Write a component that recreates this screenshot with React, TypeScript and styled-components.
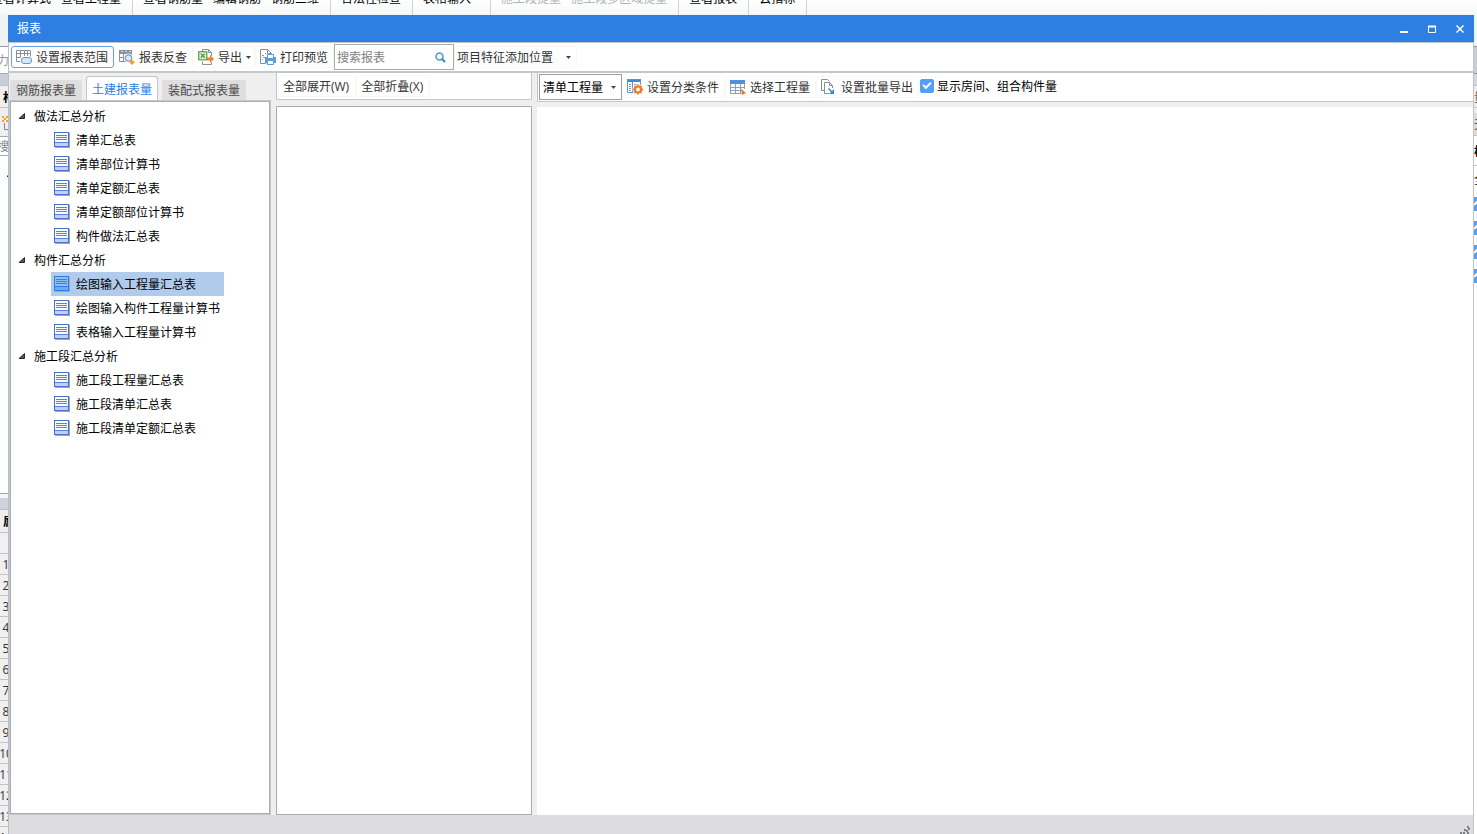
import React, { useState } from 'react';
import styled, { createGlobalStyle } from 'styled-components';

const GlobalStyle = createGlobalStyle`
  *, *::before, *::after { box-sizing: border-box; }
  body {
    margin: 0;
    overflow: hidden;
    color: #000;
    font: 12px/16px "Open Sans", "Noto Sans CJK SC", sans-serif;
  }
  button, input, select { font: inherit; color: inherit; margin: 0; padding: 0; }
  button { border: 0; background: none; white-space: nowrap; cursor: pointer; }
  ul { list-style: none; margin: 0; padding: 0; }
  svg { display: block; flex: none; }
`;

/* ---------- main window behind the dialog ---------- */

const Desktop = styled.div`
  display: flex;
  flex-direction: column;
  height: 100vh;
  background: #fff;
`;

const Ribbon = styled.div`
  display: flex;
  align-items: flex-end;
  flex: none;
  height: 15px;
  overflow: hidden;
  background: linear-gradient(#ffffff, #f5f8f8);
`;

const RibbonGroups = styled.div`
  display: flex;
  margin-left: -19px;
`;

const RibbonGroup = styled.div<{ $wide?: boolean }>`
  display: flex;
  align-items: center;
  gap: 10px;
  height: 32px;
  padding: 0 ${(p) => (p.$wide ? 19 : 11)}px 0 10px;
  border-right: 1px solid #d0d3d3;
`;

const RibbonButton = styled.button`
  height: 16px;
  &:disabled { color: #b4b4b4; }
`;

const Workspace = styled.div`
  display: flex;
  flex: 1;
  min-height: 0;
`;

const Edge = styled.div<{ $width: number }>`
  display: flex;
  flex-direction: column;
  flex: none;
  width: ${(p) => p.$width}px;
  overflow: hidden;
  background: #fff;
`;

const EdgeCell = styled.div<{ $h: number; $bg?: string; $line?: string; $color?: string; $bold?: boolean; $indent?: number }>`
  display: flex;
  align-items: center;
  flex: none;
  height: ${(p) => p.$h}px;
  padding: 2px 0 0 ${(p) => p.$indent ?? 0}px;
  background: ${(p) => p.$bg ?? '#fff'};
  border-bottom: ${(p) => (p.$line ? `1px solid ${p.$line}` : '0')};
  color: ${(p) => p.$color ?? '#000'};
  font-weight: ${(p) => (p.$bold ? 700 : 400)};
  white-space: nowrap;
`;

const Clip = styled.span<{ $pull: number }>`
  margin-left: -${(p) => p.$pull}px;
`;

const RowNumber = styled.div`
  display: flex;
  align-items: center;
  justify-content: center;
  flex: none;
  width: 12px;
  height: 21px;
  padding-top: 2px;
  background: #f0f0f0;
  border-bottom: 1px solid #c3c3c3;
  color: #333;
`;

const EdgeCheck = styled.div`
  display: flex;
  align-items: center;
  flex: none;
  height: 24px;
`;

/* ---------- dialog ---------- */

const Dialog = styled.section`
  display: flex;
  flex-direction: column;
  flex: 1;
  min-width: 0;
  background: #efefef;
`;

const TitleBar = styled.header`
  display: flex;
  align-items: center;
  justify-content: space-between;
  flex: none;
  height: 27px;
  padding-left: 9px;
  background: #2d7fe1;
  color: #fff;
`;

const Title = styled.h1`
  margin: 0;
  font-size: 12px;
  font-weight: 400;
`;

const WindowButtons = styled.div`
  display: flex;
`;

const WindowButton = styled.button`
  display: flex;
  align-items: center;
  justify-content: center;
  width: 28px;
  height: 27px;
`;

const Frame = styled.div`
  display: flex;
  flex-direction: column;
  flex: 1;
  min-height: 0;
  border-left: 1px solid #bac0cb;
  border-right: 1px solid #c0c5ca;
`;

const MainToolbar = styled.div`
  display: flex;
  align-items: center;
  flex: none;
  height: 31px;
  padding-left: 2px;
  background: #fff;
  border-top: 1px solid #c0c5ca;
  border-bottom: 2px solid #c3c8cd;
`;

const Label = styled.span`
  padding-top: 2px;
`;

const ToolButton = styled.button<{ $framed?: boolean; $menu?: boolean }>`
  display: flex;
  align-items: center;
  flex: none;
  gap: 4px;
  height: 22px;
  padding: 0 ${(p) => (p.$menu ? 3 : 5)}px 0 4px;
  border: 1px solid ${(p) => (p.$framed ? '#62a2ea' : '#f8f8f8')};
  border-radius: 3px;
  color: #333;
`;

const PositionButton = styled(ToolButton)`
  gap: 13px;
  padding: 0 5px 0 2px;
`;

const TextButton = styled(ToolButton)`
  padding: 0 6px 0 4px;
`;

const SearchBox = styled.label`
  display: flex;
  align-items: center;
  flex: none;
  width: 120px;
  height: 26px;
  padding: 0 7px 0 2px;
  border: 1px solid #ababab;
  background: #fff;
`;

const SearchInput = styled.input`
  flex: 1;
  min-width: 0;
  height: 22px;
  border: 0;
  outline: 0;
  background: none;
  &::placeholder { color: #808080; opacity: 1; }
`;

const Body = styled.div`
  display: grid;
  grid-template-columns: 260px 256px minmax(0, 1fr);
  flex: 1;
  min-height: 0;
  padding-left: 1px;
`;

const NavColumn = styled.div`
  display: flex;
  flex-direction: column;
  min-height: 0;
  padding-bottom: 1px;
`;

const Tabs = styled.div`
  display: flex;
  align-items: flex-end;
  flex: none;
  gap: 4px;
  height: 28px;
`;

const Tab = styled.button<{ $active: boolean }>`
  height: ${(p) => (p.$active ? 25 : 21)}px;
  padding: ${(p) => (p.$active ? '2px 5px 0' : '0 6px')};
  border: ${(p) => (p.$active ? '1px solid #c3c6ca' : '0')};
  border-bottom: 0;
  border-radius: 3px 3px 0 0;
  background: ${(p) => (p.$active ? '#fff' : '#dedede')};
  color: ${(p) => (p.$active ? '#2d7fe1' : '#4a4a4a')};
`;

const TreePane = styled.div`
  flex: 1;
  min-height: 0;
  overflow: hidden;
  padding-top: 2px;
  background: #fff;
  border: 1px solid #a9acb2;
  outline: 1px solid #c2c7d0;
`;

const Tree = styled.ul`
  width: max-content;
`;

const GroupButton = styled.button`
  display: flex;
  align-items: center;
  gap: 9px;
  height: 24px;
  padding-left: 7px;
`;

const Reports = styled.ul`
  padding-left: 40px;
`;

const ReportButton = styled.button<{ $selected: boolean }>`
  display: flex;
  align-items: center;
  gap: 6px;
  width: 100%;
  height: 24px;
  padding: 0 4px 0 3px;
  background: ${(p) => (p.$selected ? '#b1cbec' : 'transparent')};
`;

const OutlineColumn = styled.div`
  display: flex;
  flex-direction: column;
  gap: 6px;
  min-height: 0;
  margin: 0 -6px 0 6px;
`;

const OutlineToolbar = styled.div`
  display: flex;
  align-items: center;
  flex: none;
  height: 27px;
  padding-left: 1px;
  background: #fff;
  border: 1px solid #c3c6ca;
  border-top: 0;
`;

const OutlinePane = styled.div`
  flex: 1;
  background: #fff;
  border: 1px solid #ababab;
`;

const ReportColumn = styled.div`
  display: flex;
  flex-direction: column;
  gap: 5px;
  min-height: 0;
  margin-left: 11px;
`;

const ReportToolbar = styled.div`
  display: flex;
  align-items: center;
  flex: none;
  height: 29px;
  padding-left: 1px;
  background: #fff;
  border-left: 1px solid #c3c6ca;
  border-bottom: 1px solid #c3c8cd;
`;

const ReportPane = styled.div`
  flex: 1;
  background: #fff;
`;

const SelectBox = styled.div`
  display: grid;
  grid-template-columns: 1fr 10px;
  align-items: center;
  flex: none;
  width: 83px;
  height: 26px;
  border: 1px solid #a0a0a0;
`;

const Select = styled.select`
  grid-area: 1 / 1 / 2 / 3;
  height: 24px;
  padding: 2px 0 0 3px;
  border: 0;
  outline: 0;
  background: transparent;
  appearance: none;
`;

const SelectArrow = styled.span`
  grid-area: 1 / 2 / 2 / 3;
  pointer-events: none;
`;

const CheckLabel = styled.label`
  display: flex;
  align-items: center;
  gap: 3px;
  height: 26px;
  padding: 0 0 2px 1px;
  white-space: nowrap;
`;

const CheckInput = styled.input`
  display: grid;
  place-items: center;
  width: 14px;
  height: 14px;
  appearance: none;
  border: 1px solid #549ff5;
  border-radius: 2px;
  background: #fff;
  &:checked { background: #549ff5; }
  &:checked::after {
    content: '';
    width: 8px;
    height: 5px;
    margin-bottom: 3px;
    border: solid #fff;
    border-width: 0 0 2px 2px;
    transform: rotate(-45deg);
  }
`;

const StatusBar = styled.footer`
  display: flex;
  align-items: flex-end;
  justify-content: flex-end;
  flex: none;
  height: 19px;
  padding-right: 3px;
  background: #dddddf;
`;

/* ---------- icons ---------- */

const Icon = ({ children, w = 16, h = 16 }: { children: React.ReactNode; w?: number; h?: number }) => (
  <svg width={w} height={h} viewBox={`0 0 ${w} ${h}`} fill="none" aria-hidden="true">{children}</svg>
);

const Caret = () => (
  <Icon w={5} h={3}><path d="M0 0h5L2.500 3z" fill="#444" /></Icon>
);

const RangeIcon = () => (
  <Icon>
    <path d="M.5 1.500h14v11H.5zM.5 4.500h14M.5 8.500h14M4.500 1.500v11M8.500 1.500v7M11.500 1.500v7" stroke="#87919b" />
    <rect x="4" y="7" width="12" height="9" rx="3.500" fill="#fff" />
    <rect x="5.500" y="8.500" width="10" height="6" rx="2.500" fill="#d5e8fb" stroke="#5a9be0" />
  </Icon>
);

const TraceIcon = () => (
  <Icon>
    <path d="M0 1h13v3H0z" fill="#87919b" />
    <path d="M.5 1.500h12v11H.5zM.5 4.500h12M.5 8.500h12M4.500 1.500v11M8.500 1.500v11" stroke="#87919b" />
    <path d="M2 2.500h2M6 2.500h2M10 2.500h2" stroke="#d5d9dd" />
    <circle cx="9.500" cy="9" r="4.500" fill="#fff" />
    <circle cx="9.500" cy="9" r="3.200" fill="#dbe9fb" stroke="#7b98d8" strokeWidth="1.200" />
    <path d="M13 10.500l2.800 2.800-2.800 2.700-2.800-2.700z" fill="#f5a11c" />
  </Icon>
);

const ExportIcon = () => (
  <Icon>
    <path d="M4.500 3V.5h6l3 3V7M10.500 .5v3h3M4.500 12.500v3h9v-2" stroke="#87919b" />
    <rect x=".75" y="2.750" width="8" height="8" fill="#eaf5e7" stroke="#5ba350" strokeWidth="1.300" />
    <path d="M2.800 4.800l4 4M6.800 4.800l-4 4" stroke="#4f9a45" strokeWidth="1.400" />
    <path d="M8.500 8.500h3.500V6l4 4-4 4v-2.500H8.500z" fill="#f07f2e" />
  </Icon>
);

const PreviewIcon = () => (
  <Icon>
    <path d="M6 14.500H.5V.5h7l4 4V6M7.500 .5v4h4" stroke="#87919b" />
    <path d="M2 6h2v1H2zM3 8h2v1H3zM2 10h1v1H2zM5 4h1v1H5z" fill="#87919b" />
    <path d="M5 8h11v6H5z" fill="#5a9be0" />
    <path d="M7.500 5.500h6v4h-6z" fill="#fff" stroke="#5a9be0" />
    <path d="M7.500 11.500h6v4h-6z" fill="#fff" stroke="#5a9be0" />
  </Icon>
);

const SearchIcon = () => (
  <Icon w={11} h={11}>
    <circle cx="4.500" cy="4.500" r="3.500" stroke="#4a9fd0" strokeWidth="1.600" />
    <path d="M7 7l3 3" stroke="#3a83bd" strokeWidth="2" />
  </Icon>
);

const ClassifyIcon = () => (
  <Icon>
    <path d="M0 0h14v3H0z" fill="#4386d3" />
    <path d="M.5 .5h13v13H.5zM5.500 3v11" stroke="#5a94d8" />
    <path d="M2 5.500h2M2 7.500h2M2 9.500h2M2 11.500h2M7 5.500h4" stroke="#87919b" />
    <circle cx="11" cy="10.500" r="5.500" fill="#fff" />
    <circle cx="11" cy="10.500" r="3" stroke="#ee7b2a" strokeWidth="2.200" />
    <path d="M11 5.500v2M11 13.500v2M6 10.500h2M14 10.500h2M7.500 7l1.500 1.500M13 12.500l1.500 1.500M14.500 7L13 8.500M9 12.500L7.500 14" stroke="#ee7b2a" strokeWidth="1.800" />
  </Icon>
);

const QuantityIcon = () => (
  <Icon>
    <path d="M0 1h15v4H0z" fill="#4c93dd" />
    <path d="M.5 5v9.500M.5 14.500h11M14.500 5v5M5.500 5v9.500M10.500 5v9.500M.5 8.500h14M.5 11.500h11" stroke="#8aa2b8" />
    <path d="M11 9.500l5 4.500-4 2z" fill="#ee7b2a" />
  </Icon>
);

const BatchIcon = () => (
  <Icon>
    <path d="M3 11.500H.5V.5h6l2 2M8 14.500H3.500v-11h5l3 3V9M8.500 3.500v3h3" stroke="#87919b" />
    <path d="M7.500 9.500l4 4" stroke="#4386d3" strokeWidth="1.600" />
    <path d="M13 10v5H8z" fill="#4386d3" />
  </Icon>
);

const ReportIcon = ({ selected }: { selected: boolean }) => (
  <Icon>
    <path d="M15.500 1v15M1 15.500h15" stroke="#9aa5c0" />
    <rect x=".5" y=".5" width="14" height="14" fill={selected ? '#8fc0f7' : '#f7faff'} stroke={selected ? '#2f7be0' : '#4a70ca'} />
    <path d="M1 11h13v3H1z" fill={selected ? '#6cacf7' : '#bcd0fa'} />
    <path d="M1 10.500h13" stroke={selected ? '#2f7be0' : '#5c80d2'} />
    <path d="M2 3.500h11M2 5.500h11M2 7.500h11" stroke={selected ? '#3a7fd6' : '#6682c4'} />
  </Icon>
);

const Expander = () => (
  <Icon w={7} h={6}><path d="M6.500 .5v5h-5.500z" fill="#555" stroke="#2a2a2a" /></Icon>
);

/* ---------- data ---------- */

const ribbon: { items: string[]; disabled?: boolean; wide?: boolean }[] = [
  { items: ['查看计算式', '查看工程量'] },
  { items: ['查看钢筋量', '编辑钢筋', '钢筋三维'] },
  { items: ['合法性检查'] },
  { items: ['表格输入'], wide: true },
  { items: ['施工段提量', '施工段多区域提量'], disabled: true },
  { items: ['查看报表'] },
  { items: ['云指标'] },
];

const tabs = ['钢筋报表量', '土建报表量', '装配式报表量'];

const groups = [
  { name: '做法汇总分析', reports: ['清单汇总表', '清单部位计算书', '清单定额汇总表', '清单定额部位计算书', '构件做法汇总表'] },
  { name: '构件汇总分析', reports: ['绘图输入工程量汇总表', '绘图输入构件工程量计算书', '表格输入工程量计算书'] },
  { name: '施工段汇总分析', reports: ['施工段工程量汇总表', '施工段清单汇总表', '施工段清单定额汇总表'] },
];

const rowNumbers = Array.from({ length: 14 }, (_, i) => i + 1);

export default function App() {
  const [tab, setTab] = useState(tabs[1]);
  const [report, setReport] = useState('绘图输入工程量汇总表');
  const [closed, setClosed] = useState<string[]>([]);
  const [showRooms, setShowRooms] = useState(true);

  const toggle = (name: string) =>
    setClosed((c) => (c.includes(name) ? c.filter((n) => n !== name) : [...c, name]));

  return (
    <Desktop>
      <GlobalStyle />
      <Ribbon>
        <RibbonGroups>
          {ribbon.map((g) => (
            <RibbonGroup key={g.items[0]} $wide={g.wide}>
              {g.items.map((t) => <RibbonButton key={t} disabled={g.disabled}>{t}</RibbonButton>)}
            </RibbonGroup>
          ))}
        </RibbonGroups>
      </Ribbon>

      <Workspace>
        <Edge $width={8}>
          <EdgeCell $h={32} $bg="#f1f4f4" $line="#9a9da1" />
          <EdgeCell $h={27} $line="#a5a8ac" $color="#999"><Clip $pull={3}>力</Clip></EdgeCell>
          <EdgeCell $h={12} $bg="#c9cdd5" $line="#c0c3c8" />
          <EdgeCell $h={22} $bg="#efefef" $line="#c3c3c3" $bold $indent={3}>构</EdgeCell>
          <EdgeCell $h={29} $bg="#efefef" $line="#a5a8ac" $indent={2}>
            <Icon w={12} h={14}>
              <path d="M0 0h2v2H0zM4 0h2v2H4zM2 2h2v2H2zM0 4h2v2H0zM4 4h2v2H4z" fill="#f5a11c" />
              <path d="M2.500 7v6.500h9V2" stroke="#7c8792" />
            </Icon>
          </EdgeCell>
          <EdgeCell $h={19} $line="#a5a8ac" $color="#808080"><Clip $pull={3}>搜</Clip></EdgeCell>
          <EdgeCell $h={34} $indent={6}><Expander /></EdgeCell>
          <EdgeCell $h={304} $line="#a5a5a5" />
          <EdgeCell $h={4} $bg="#f5f5f5" />
          <EdgeCell $h={12} $bg="#d0d3da" $line="#bcbfc6" />
          <EdgeCell $h={23} $bg="#efefef" $line="#c3c3c3" $bold $indent={3}>属</EdgeCell>
          <EdgeCell $h={21} $bg="#f0f0f0" $line="#c3c3c3" />
          {rowNumbers.map((n) => <RowNumber key={n}>{n}</RowNumber>)}
        </Edge>

        <Dialog aria-label="报表">
          <TitleBar>
            <Title>报表</Title>
            <WindowButtons>
              <WindowButton aria-label="最小化"><Icon w={8} h={8}><path d="M0 7h8" stroke="#fff" strokeWidth="2" /></Icon></WindowButton>
              <WindowButton aria-label="最大化"><Icon w={8} h={8}><path d="M.5 1v6.500h7V1" stroke="#fff" /><path d="M0 1.500h8" stroke="#fff" strokeWidth="2" /></Icon></WindowButton>
              <WindowButton aria-label="关闭"><Icon w={8} h={8}><path d="M.5 .5l7 7M7.500 .5l-7 7" stroke="#fff" strokeWidth="1.500" /></Icon></WindowButton>
            </WindowButtons>
          </TitleBar>

          <Frame>
            <MainToolbar>
              <ToolButton $framed><RangeIcon /><Label>设置报表范围</Label></ToolButton>
              <ToolButton><TraceIcon /><Label>报表反查</Label></ToolButton>
              <ToolButton $menu><ExportIcon /><Label>导出</Label><Caret /></ToolButton>
              <ToolButton><PreviewIcon /><Label>打印预览</Label></ToolButton>
              <SearchBox>
                <SearchInput placeholder="搜索报表" aria-label="搜索报表" />
                <SearchIcon />
              </SearchBox>
              <PositionButton><Label>项目特征添加位置</Label><Caret /></PositionButton>
            </MainToolbar>

            <Body>
              <NavColumn>
                <Tabs role="tablist">
                  {tabs.map((t) => (
                    <Tab key={t} role="tab" aria-selected={t === tab} $active={t === tab} onClick={() => setTab(t)}>{t}</Tab>
                  ))}
                </Tabs>
                <TreePane>
                  <Tree>
                    {groups.map((g) => (
                      <li key={g.name}>
                        <GroupButton aria-expanded={!closed.includes(g.name)} onClick={() => toggle(g.name)}>
                          <Expander /><Label>{g.name}</Label>
                        </GroupButton>
                        {!closed.includes(g.name) && (
                          <Reports>
                            {g.reports.map((r) => (
                              <li key={r}>
                                <ReportButton $selected={r === report} onClick={() => setReport(r)}>
                                  <ReportIcon selected={r === report} /><Label>{r}</Label>
                                </ReportButton>
                              </li>
                            ))}
                          </Reports>
                        )}
                      </li>
                    ))}
                  </Tree>
                </TreePane>
              </NavColumn>

              <OutlineColumn>
                <OutlineToolbar>
                  <TextButton><Label>全部展开(W)</Label></TextButton>
                  <TextButton><Label>全部折叠(X)</Label></TextButton>
                </OutlineToolbar>
                <OutlinePane />
              </OutlineColumn>

              <ReportColumn>
                <ReportToolbar>
                  <SelectBox>
                    <Select aria-label="工程量类型" defaultValue="清单工程量">
                      <option>清单工程量</option>
                      <option>定额工程量</option>
                    </Select>
                    <SelectArrow><Caret /></SelectArrow>
                  </SelectBox>
                  <ToolButton><ClassifyIcon /><Label>设置分类条件</Label></ToolButton>
                  <ToolButton><QuantityIcon /><Label>选择工程量</Label></ToolButton>
                  <ToolButton><BatchIcon /><Label>设置批量导出</Label></ToolButton>
                  <CheckLabel>
                    <CheckInput type="checkbox" checked={showRooms} onChange={(e) => setShowRooms(e.target.checked)} />
                    <Label>显示房间、组合构件量</Label>
                  </CheckLabel>
                </ReportToolbar>
                <ReportPane />
              </ReportColumn>
            </Body>

            <StatusBar>
              <Icon w={10} h={8}>
                <path d="M7 0h2v2H7zM8 2h2v2H8zM4 3h2v2H4zM6 4h2v2H6zM0 6h2v2H0zM3 6h2v2H3zM7 6h2v2H7z" fill="#7b7f86" />
              </Icon>
            </StatusBar>
          </Frame>
        </Dialog>

        <Edge $width={3}>
          <EdgeCell $h={32} $bg="#f1f4f4" $line="#8f9296" />
          <EdgeCell $h={27} $bg="#c9ccd3" $line="#8f9296" />
          <EdgeCell $h={12} $bg="#d3d6dc" $line="#c0c3c8" />
          <EdgeCell $h={22} $bg="#efefef" $line="#c3c3c3" $color="#555">量</EdgeCell>
          <EdgeCell $h={5} $bg="#efefef" />
          <EdgeCell $h={23} $bg="#dcdcdc" $line="#c3c3c3" $color="#555">无</EdgeCell>
          <EdgeCell $h={30} $line="#c3c3c3" $bold>构</EdgeCell>
          <EdgeCell $h={26}>全</EdgeCell>
          {[0, 1, 2, 3].map((n) => (
            <EdgeCheck key={n}>
              <Icon w={14} h={14}>
                <path d="M0 0h14v14H0z" fill="#549ff5" />
                <path d="M0 8l4-4" stroke="#fff" strokeWidth="2" />
              </Icon>
            </EdgeCheck>
          ))}
        </Edge>
      </Workspace>
    </Desktop>
  );
}
